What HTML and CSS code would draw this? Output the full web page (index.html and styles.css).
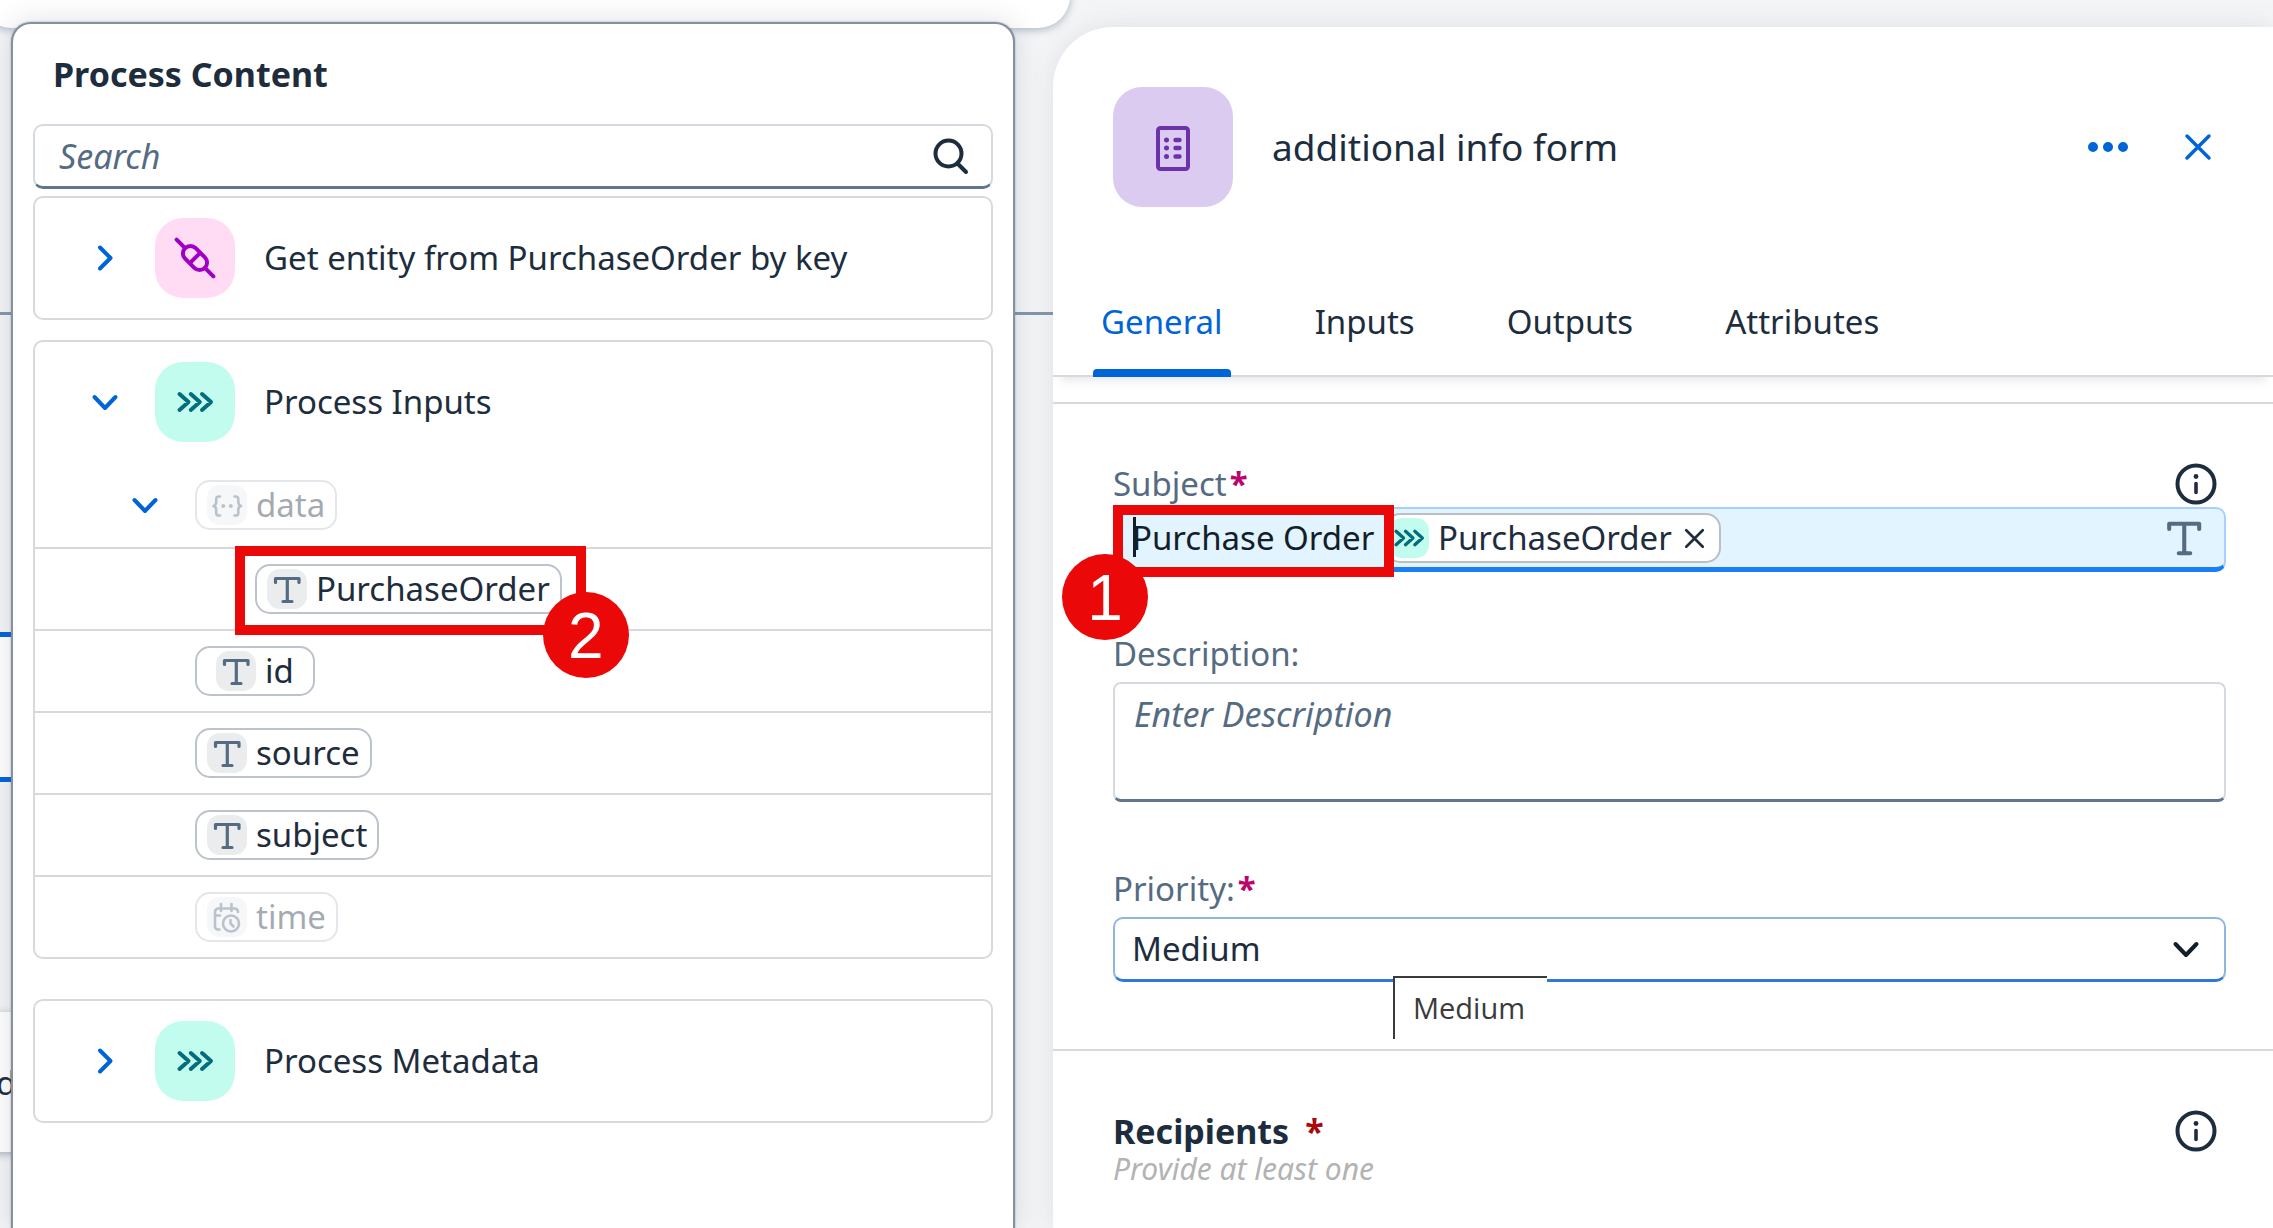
FILE: index.html
```html
<!DOCTYPE html>
<html lang="en">
<head>
<meta charset="utf-8">
<title>additional info form</title>
<link rel="stylesheet" href="styles.css">
</head>
<body>

<svg class="sprite" aria-hidden="true">
  <symbol id="i-right" viewBox="0 0 28 28"><path d="M9 3.5 19.5 14 9 24.500" stroke-width="4"/></symbol>
  <symbol id="i-down" viewBox="0 0 28 28"><path d="M3.500 9 14 20 24.500 9" stroke-width="4"/></symbol>
  <symbol id="i-process" viewBox="0 0 80 80"><path d="M24.500 32l9 8-9 8M35.800 32l9 8-9 8M47 32l9 8-9 8" stroke-width="4"/></symbol>
  <symbol id="i-connector" viewBox="0 0 80 80"><g transform="rotate(45 40 40)" stroke-width="4"><path d="M14 40h12M54 40h12M40 33v14"/><rect x="26" y="32.500" width="28" height="15" rx="7.500"/></g></symbol>
  <symbol id="i-text" viewBox="0 0 40 40"><path d="M8.500 13.500v-4h23.500v4M20.300 9.500v23M16 32.500h9" stroke-width="3.200"/></symbol>
  <symbol id="i-object" viewBox="0 0 40 40"><path d="M13 11.500h-1c-2 0-2.800 1-2.800 2.600v3c0 2-.8 3.300-2.700 3.900 1.900.6 2.700 1.900 2.700 3.900v3c0 1.600.8 2.600 2.800 2.600h1M27.500 11.500h1c2 0 2.800 1 2.800 2.600v3c0 2 .8 3.300 2.700 3.900-1.900.6-2.700 1.900-2.700 3.900v3c0 1.600-.8 2.600-2.800 2.600h-1" stroke-width="2.600"/><path d="M16.300 21h.01M23.800 21h.01" stroke-width="4"/></symbol>
  <symbol id="i-datetime" viewBox="0 0 40 40"><path d="M12.500 32.500H11a3 3 0 0 1-3-3V15a3.500 3.500 0 0 1 3.500-3.500h16A3.500 3.500 0 0 1 31 15M14 7v7M24.500 7v7M8 18.500h5" stroke-width="2.600"/><circle cx="24" cy="26.500" r="8" stroke-width="2.600"/><path d="M23.500 23v3.500l3 3" stroke-width="2.600"/></symbol>
  <symbol id="i-info" viewBox="0 0 42 42"><circle cx="21" cy="21" r="18.500" stroke-width="4"/><path d="M21 20.500v9" stroke-width="3.600"/><path d="M21 13.500h.01" stroke-width="4.800"/></symbol>
  <symbol id="i-close" viewBox="0 0 28 28"><path d="M3 3l22 22M25 3 3 25" stroke-width="3.500"/></symbol>
</svg>

<div class="canvas" aria-hidden="true">
  <div class="canvas-toolbar"></div>
  <div class="canvas-edge"></div>
  <div class="canvas-node canvas-node-selected"></div>
  <div class="canvas-node canvas-node-plain">d</div>
</div>

<main class="layout">
  <section class="picker" aria-labelledby="picker-title">
    <h2 class="picker-title" id="picker-title">Process Content</h2>
    <div class="search">
      <input class="search-input" type="search" placeholder="Search" aria-label="Search">
      <button class="icon-button" type="button" aria-label="Search"><svg class="icon search-icon" viewBox="0 0 36 38"><circle cx="15.500" cy="16.500" r="13" stroke-width="4"/><path d="M25 27l8 8" stroke-width="4"/></svg></button>
    </div>

    <article class="group">
      <button class="group-header" type="button" aria-expanded="false">
        <svg class="icon chevron"><use href="#i-right"/></svg>
        <svg class="icon tile tile-pink"><use href="#i-connector"/></svg>
        <span>Get entity from PurchaseOrder by key</span>
      </button>
    </article>

    <article class="group">
      <button class="group-header" type="button" aria-expanded="true">
        <svg class="icon chevron"><use href="#i-down"/></svg>
        <svg class="icon tile tile-mint"><use href="#i-process"/></svg>
        <span>Process Inputs</span>
      </button>
      <ul class="tree">
        <li class="tree-row tree-parent">
          <button class="icon-button" type="button" aria-label="Collapse data"><svg class="icon chevron"><use href="#i-down"/></svg></button>
          <button class="chip" type="button" disabled><svg class="icon chip-icon"><use href="#i-object"/></svg>data</button>
        </li>
        <li class="tree-row tree-child">
          <div class="marked">
            <button class="chip" type="button"><svg class="icon chip-icon"><use href="#i-text"/></svg>PurchaseOrder</button>
            <span class="marker marker-two"><span class="marker-number">2</span></span>
          </div>
        </li>
        <li class="tree-row"><button class="chip" type="button"><svg class="icon chip-icon"><use href="#i-text"/></svg>id</button></li>
        <li class="tree-row"><button class="chip" type="button"><svg class="icon chip-icon"><use href="#i-text"/></svg>source</button></li>
        <li class="tree-row"><button class="chip" type="button"><svg class="icon chip-icon"><use href="#i-text"/></svg>subject</button></li>
        <li class="tree-row"><button class="chip" type="button" disabled><svg class="icon chip-icon"><use href="#i-datetime"/></svg>time</button></li>
      </ul>
    </article>

    <article class="group group-spaced">
      <button class="group-header" type="button" aria-expanded="false">
        <svg class="icon chevron"><use href="#i-right"/></svg>
        <svg class="icon tile tile-mint"><use href="#i-process"/></svg>
        <span>Process Metadata</span>
      </button>
    </article>
  </section>

  <section class="panel" aria-labelledby="panel-title">
    <header class="panel-header">
      <svg class="icon form-tile" viewBox="0 0 120 120"><rect x="45" y="41" width="30" height="41" rx="2.500" stroke-width="4"/><path d="M53.500 53h.01M53.500 61h.01M53.500 69.500h.01" stroke-width="5"/><path d="M62.500 53h4M62.500 61h4M62.500 69.500h4" stroke-width="4.400"/></svg>
      <h1 class="panel-title" id="panel-title">additional info form</h1>
      <button class="icon-button link-colour" type="button" aria-label="More actions"><svg class="icon more-icon" viewBox="0 0 40 10"><path d="M5 5h.01M20 5h.01M35 5h.01" stroke-width="10"/></svg></button>
      <button class="icon-button link-colour" type="button" aria-label="Close"><svg class="icon close-icon"><use href="#i-close"/></svg></button>
    </header>

    <div class="tabs" role="tablist">
      <button class="tab tab-active" type="button" role="tab" aria-selected="true">General</button>
      <button class="tab" type="button" role="tab" aria-selected="false">Inputs</button>
      <button class="tab" type="button" role="tab" aria-selected="false">Outputs</button>
      <button class="tab" type="button" role="tab" aria-selected="false">Attributes</button>
    </div>

    <form class="form">
      <div class="field field-subject">
        <div class="label-row">
          <label for="subject">Subject<span class="required">*</span></label>
          <button class="icon-button" type="button" aria-label="About the subject"><svg class="icon info-icon"><use href="#i-info"/></svg></button>
        </div>
        <div class="subject-box">
          <input class="subject-input" id="subject" type="text" value="Purchase Order">
          <span class="token">
            <svg class="icon token-icon" viewBox="16 16 48 48"><use href="#i-process" width="80" height="80"/></svg>
            PurchaseOrder
            <button class="icon-button" type="button" aria-label="Remove PurchaseOrder"><svg class="icon token-close"><use href="#i-close"/></svg></button>
          </span>
          <svg class="icon type-icon" viewBox="6 7 29 28"><use href="#i-text" width="40" height="40"/></svg>
          <span class="caret"></span>
          <span class="marker marker-one"><span class="marker-number">1</span></span>
        </div>
      </div>

      <div class="field field-description">
        <label for="description">Description:</label>
        <textarea class="description" id="description" placeholder="Enter Description"></textarea>
      </div>

      <div class="field">
        <label for="priority">Priority:<span class="required">*</span></label>
        <div class="select-wrap">
          <select class="select" id="priority">
            <option>Low</option>
            <option selected>Medium</option>
            <option>High</option>
          </select>
          <svg class="icon select-icon"><use href="#i-down"/></svg>
          <span class="tooltip" role="tooltip">Medium</span>
        </div>
      </div>
    </form>

    <section class="recipients">
      <div class="label-row">
        <h3 class="recipients-title">Recipients<span class="required-red">*</span></h3>
        <button class="icon-button" type="button" aria-label="About recipients"><svg class="icon info-icon"><use href="#i-info"/></svg></button>
      </div>
      <p class="hint">Provide at least one</p>
    </section>
  </section>
</main>
</body>
</html>
```
FILE: styles.css
```css
:root {
  --text: #1d2d3e;
  --label: #556b82;
  --link: #0064d9;
  --line: #d9d9d9;
  --field-line: #d5dae1;
  --chip-line: #bcc3ce;
  --mint: #c2fcee;
  --teal: #046c7a;
  --marker: #ea0808;
}

* {
  box-sizing: border-box;
}

body {
  position: relative;
  min-height: 100vh;
  margin: 0;
  overflow: hidden;
  background: #f4f5f7;
  color: var(--text);
  font: 33px/44px "Noto Sans", sans-serif;
}

h1, h2, h3, p, ul {
  margin: 0;
  padding: 0;
}

ul {
  list-style: none;
}

button, input, textarea, select {
  font: inherit;
  color: inherit;
}

button {
  padding: 0;
  border: 0;
  background: none;
  text-align: left;
}

label {
  color: var(--label);
}

.sprite {
  position: absolute;
  width: 0;
  height: 0;
}

.icon {
  display: block;
  flex: none;
  fill: none;
  stroke: currentColor;
  stroke-linecap: round;
  stroke-linejoin: round;
}

.icon-button {
  display: flex;
  flex: none;
}

.link-colour {
  color: var(--link);
}

/* Diagram behind the panels */
.canvas {
  position: absolute;
  inset: 0;
  overflow: hidden;
}

.canvas-toolbar {
  position: absolute;
  top: -60px;
  left: -20px;
  width: 1090px;
  height: 88px;
  border-radius: 32px;
  background: #fff;
  box-shadow: 0 2px 8px rgba(85, 107, 130, 0.45);
}

.canvas-edge {
  position: absolute;
  top: 312px;
  left: 0;
  width: 1100px;
  height: 3px;
  background: #8497ac;
}

.canvas-node {
  position: absolute;
  left: -10px;
  width: 400px;
  padding-left: 6px;
  background: #fff;
}

.canvas-node-selected {
  top: 632px;
  height: 150px;
  border: solid var(--link);
  border-width: 5px 0;
}

.canvas-node-plain {
  top: 1012px;
  height: 140px;
  line-height: 142px;
  box-shadow: 0 2px 8px rgba(85, 107, 130, 0.5);
}

.layout {
  position: relative;
  display: grid;
  grid-template-columns: 1004fr 1220fr;
  gap: 38px;
  min-height: 100vh;
  padding-left: 11px;
}

/* Content picker */
.picker {
  margin-top: 22px;
  padding: 28px 20px;
  border: 2px solid #8491a0;
  border-bottom: 0;
  border-radius: 20px 20px 0 0;
  background: #fff;
  box-shadow: 0 0 2px rgba(85, 107, 130, 0.6), 0 0 28px rgba(70, 80, 95, 0.18);
}

.picker-title {
  margin: 0 20px 28px;
  font-size: 34px;
  font-weight: 700;
}

.search {
  display: flex;
  align-items: center;
  height: 65px;
  margin-bottom: 7px;
  padding: 0 22px 0 24px;
  border: 2px solid var(--field-line);
  border-bottom: 3px solid #61768c;
  border-radius: 10px;
}

.search-input {
  flex: 1;
  min-width: 0;
  padding: 0;
  border: 0;
  outline: 0;
  background: none;
  appearance: none;
}

.search-input,
.description {
  font-size: 34px;
}

::placeholder {
  color: var(--label);
  font-style: italic;
  opacity: 1;
}

.search-icon {
  width: 36px;
  height: 38px;
}

.group {
  margin-bottom: 20px;
  border: 2px solid var(--line);
  border-radius: 10px;
}

.group-spaced {
  margin-top: 40px;
}

.group-header {
  display: flex;
  align-items: center;
  width: 100%;
  height: 120px;
  padding-left: 56px;
}

.chevron {
  width: 28px;
  height: 28px;
  color: var(--link);
}

.tile {
  width: 80px;
  height: 80px;
  margin: 0 29px 0 36px;
  border-radius: 28px;
}

.tile-pink {
  background: #ffdcf3;
  color: #a100c2;
}

.tile-mint {
  background: var(--mint);
  color: var(--teal);
}

.tree-row {
  display: flex;
  align-items: center;
  height: 82px;
  padding-left: 160px;
  border-bottom: 2px solid var(--line);
}

.tree-row:last-child {
  height: 80px;
  border-bottom: 0;
}

.tree-parent {
  gap: 36px;
  height: 87px;
  padding-left: 96px;
}

.tree-child {
  padding-left: 220px;
}

.chip {
  display: flex;
  align-items: center;
  justify-content: center;
  gap: 9px;
  min-width: 120px;
  height: 50px;
  padding: 0 10px;
  border: 2px solid var(--chip-line);
  border-radius: 15px;
  background: #fff;
  line-height: 44px;
}

.chip:disabled {
  opacity: 0.4;
}

.chip-icon {
  width: 40px;
  height: 40px;
  border-radius: 13px;
  background: #eaecee;
  color: var(--label);
}

/* Numbered callouts */
.marked {
  position: relative;
}

.marker {
  position: absolute;
  border: 10px solid var(--marker);
}

.marker-number {
  position: absolute;
  width: 86px;
  height: 86px;
  border-radius: 50%;
  background: var(--marker);
  color: #fff;
  font: 64px/88px "Liberation Sans", sans-serif;
  text-align: center;
}

.marker-two {
  inset: -18px -24px -21px -20px;
}

.marker-two .marker-number {
  right: -53px;
  bottom: -53px;
}

.marker-one {
  top: -4px;
  left: -2px;
  width: 281px;
  height: 72px;
}

.marker-one .marker-number {
  left: -61px;
  top: 39px;
}

/* Properties panel */
.panel {
  margin-top: 27px;
  border-top-left-radius: 60px;
  background: #fff;
  box-shadow: 0 0 28px rgba(70, 80, 95, 0.12);
}

.panel-header {
  display: flex;
  align-items: center;
  padding: 60px 61px 93px 60px;
}

.form-tile {
  width: 120px;
  height: 120px;
  border-radius: 29px;
  background: #dccbf0;
  color: #6c32a9;
}

.panel-title {
  flex: 1;
  margin-left: 39px;
  font-size: 37px;
  font-weight: 400;
}

.more-icon {
  width: 40px;
  height: 10px;
  margin-right: 56px;
}

.close-icon {
  width: 28px;
  height: 28px;
}

.tabs {
  display: flex;
  gap: 76px;
  padding-left: 40px;
  border-bottom: 2px solid var(--line);
  box-shadow: 0 12px 8px -8px rgba(85, 107, 130, 0.15);
}

.tab {
  height: 77px;
  margin-bottom: -2px;
  padding: 0 8px 33px;
}

.tab-active {
  padding-bottom: 0;
  color: var(--link);
}

.tab-active::after {
  content: "";
  display: block;
  height: 8px;
  margin: 25px -8px 0;
  border-radius: 4px 4px 0 0;
  background: var(--link);
}

.form {
  margin-top: 25px;
  padding: 58px 47px 67px 60px;
  border-top: 2px solid var(--line);
}

.field {
  display: flex;
  flex-direction: column;
  gap: 6px;
}

.field-subject {
  gap: 1px;
  margin-bottom: 60px;
}

.field-description {
  margin-bottom: 65px;
}

.label-row {
  display: flex;
  align-items: center;
  justify-content: space-between;
}

.required {
  margin-left: 3px;
  color: #ba066c;
  font-weight: 700;
}

.info-icon {
  width: 42px;
  height: 42px;
  margin-right: 9px;
}

.subject-box {
  position: relative;
  display: flex;
  align-items: center;
  height: 65px;
  padding: 0 21px 0 17px;
  border: 2px solid #a6d0ff;
  border-bottom: 5px solid #1a7ff5;
  border-radius: 10px;
  background: #e1f4ff;
}

.subject-input {
  width: 253px;
  padding: 0;
  border: 0;
  outline: 0;
  background: none;
  color: #131e29;
}

.caret {
  position: absolute;
  top: 8px;
  left: 18px;
  width: 3px;
  height: 40px;
  background: #131e29;
}

.token {
  display: flex;
  align-items: center;
  gap: 9px;
  height: 50px;
  padding: 0 14px 0 2px;
  border: 2px solid #bbbec3;
  border-radius: 15px;
  background: #fff;
}

.token-icon {
  width: 40px;
  height: 40px;
  border-radius: 13px;
  background: var(--mint);
  color: var(--teal);
}

.token-close {
  width: 21px;
  height: 21px;
  margin-left: 3px;
}

.type-icon {
  width: 37px;
  height: 37px;
  margin-left: auto;
  color: var(--label);
}

.description {
  height: 120px;
  padding: 8px 19px;
  border: 2px solid var(--field-line);
  border-bottom: 3px solid #61768c;
  border-radius: 8px;
  outline: 0;
  resize: none;
}

.select-wrap {
  position: relative;
}

.select {
  display: block;
  width: 100%;
  height: 65px;
  padding: 0 17px;
  border: 2px solid #8fb5e3;
  border-bottom: 3px solid #2f78d4;
  border-radius: 10px;
  outline: 0;
  background: #fff;
  appearance: none;
}

.select-icon {
  position: absolute;
  top: 18px;
  right: 26px;
  width: 28px;
  height: 28px;
  color: #131e29;
  pointer-events: none;
}

.tooltip {
  position: absolute;
  top: 59px;
  left: 280px;
  padding: 8px 22px 9px 18px;
  border: solid #3b3b3b;
  border-width: 2px 0 0 2px;
  background: #fff;
  color: #3b3b3b;
  font: 29px/44px "Open Sans", sans-serif;
}

.recipients {
  padding: 58px 47px 45px 60px;
  border-top: 2px solid var(--line);
}

.recipients-title {
  font-size: 34px;
  font-weight: 700;
}

.required-red {
  margin-left: 16px;
  color: #aa0808;
}

.hint {
  color: #b3b3b3;
  font-size: 30px;
  font-style: italic;
  line-height: 32px;
}
```
